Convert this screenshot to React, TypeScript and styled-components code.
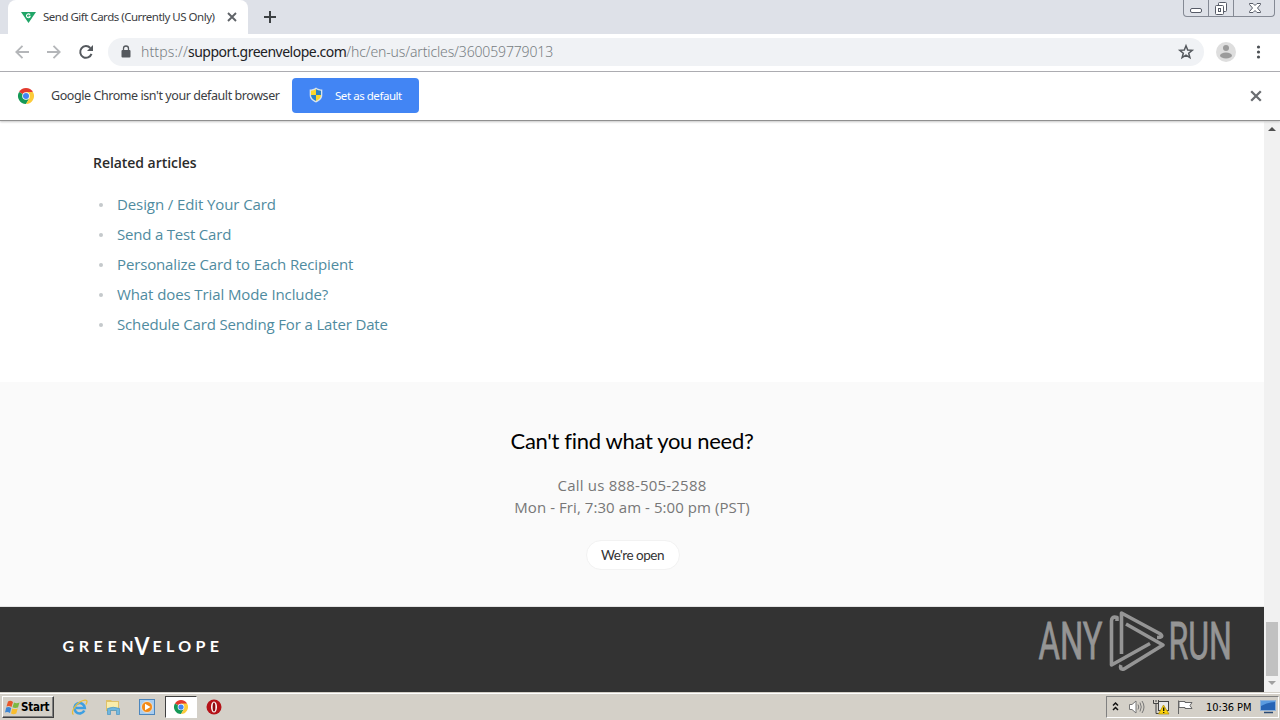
import styled, { createGlobalStyle } from 'styled-components';

const GlobalStyle = createGlobalStyle`
    * {
        box-sizing: border-box;
    }
    body {
        margin: 0;
        overflow: hidden;
    }
    svg {
        display: block;
        flex: none;
        overflow: visible;
    }
`
const Screen = styled.div`
    display: flex;
    flex-direction: column;
    width: 1280px;
    height: 720px;
    background: #fff;
    font-family: 'DejaVu Sans Condensed', 'DejaVu Sans', sans-serif;
    white-space: nowrap;
`
const TabStrip = styled.div`
    display: flex;
    height: 34px;
    padding-left: 8px;
    background: #dee1e8;
`
const Tab = styled.div`
    display: flex;
    align-items: center;
    width: 240px;
    height: 34px;
    padding-left: 13px;
    border-radius: 8px 8px 0 0;
    background: #fff;
`
const TabTitle = styled.div`
    width: 175px;
    margin: 0 9px 0 7px;
    font-family: 'Noto Sans', sans-serif;
    font-size: 11.5px;
    line-height: 34px;
    letter-spacing: -0.5px;
    color: #3c4043;
`
const NewTab = styled.div`
    flex: 1;
    padding: 11px 0 0 16px;
`
const WindowButtons = styled.div`
    display: flex;
    width: 92px;
    height: 17px;
    margin-right: 5px;
    border: 1px solid #848994;
    border-top: 0;
    border-radius: 0 0 4px 4px;
`
const WindowButton = styled.div<{ $width: number }>`
    display: flex;
    flex: none;
    justify-content: center;
    width: ${(props) => props.$width}px;
    border-right: 1px solid #848994;
    &:last-child {
        border-right: 0;
    }
`
const Toolbar = styled.div`
    display: flex;
    align-items: center;
    height: 38px;
    padding: 0 13px 1px 15px;
    border-bottom: 1px solid #aaabb0;
`
const NavIcons = styled.div`
    display: flex;
    gap: 18px;
    width: 93px;
`
const Omnibox = styled.div`
    display: flex;
    align-items: center;
    width: 1096px;
    height: 28px;
    margin-right: 12px;
    padding: 0 10px 0 13px;
    border-radius: 14px;
    background: #f0f2f5;
`
const Url = styled.div`
    flex: 1;
    margin: -1px 0 0 10px;
    font-family: 'Noto Sans', sans-serif;
    font-weight: 300;
    font-size: 14px;
    letter-spacing: 0.12px;
    color: #777d82;
`
const Domain = styled.span`
    font-weight: 400;
    letter-spacing: -0.5px;
    color: #202124;
`
const UrlPath = styled.span`
    letter-spacing: -0.14px;
`
const MenuIcon = styled.div`
    margin-left: 20px;
`
const InfoBar = styled.div`
    display: flex;
    align-items: center;
    height: 49px;
    padding: 0 18px 1px;
    border-bottom: 1px solid #909090;
    box-shadow: 0 1px 2px #c8c8c8;
    position: relative;
`
const InfoText = styled.div`
    width: 258px;
    padding-left: 17px;
    font-family: 'Noto Sans', sans-serif;
    font-size: 12.5px;
    line-height: 18px;
    letter-spacing: -0.43px;
    color: #3c4043;
`
const DefaultButton = styled.button`
    display: flex;
    align-items: center;
    gap: 12px;
    width: 127px;
    height: 35px;
    margin-right: auto;
    padding: 0 0 1px 17px;
    border: 0;
    border-radius: 4px;
    background: #4285f4;
    font-family: 'Noto Sans', sans-serif;
    font-size: 11.5px;
    letter-spacing: -0.45px;
    color: #fff;
`
const Viewport = styled.div`
    display: flex;
    height: 571px;
`
const Page = styled.main`
    width: 1264px;
    font-family: 'Open Sans', sans-serif;
`
const Related = styled.section`
    height: 261px;
    padding: 30px 93px 0;
`
const RelatedTitle = styled.h3`
    margin: 0 0 15px;
    font-size: 14px;
    font-weight: 600;
    line-height: 23px;
    letter-spacing: -0.05px;
    color: #2b2b2b;
`
const ArticleList = styled.ul`
    margin: 0;
    padding: 0;
    list-style: none;
`
const Article = styled.li<{ $spacing: number }>`
    display: flex;
    align-items: center;
    height: 30px;
    font-size: 15px;
    letter-spacing: ${(props) => props.$spacing}px;
    color: #4f8ba0;
    &::before {
        content: '';
        width: 4px;
        height: 4px;
        margin: 1px 14px 0 6px;
        border-radius: 2px;
        background: #c5c9cc;
    }
`
const Contact = styled.section`
    display: flex;
    flex-direction: column;
    align-items: center;
    height: 225px;
    padding-top: 42px;
    border-bottom: 1px solid #e4e4e4;
    background: #fafafa;
`
const ContactTitle = styled.h2`
    margin: 0 0 16px;
    font-family: Lato, sans-serif;
    font-size: 22px;
    font-weight: 400;
    line-height: 34px;
    letter-spacing: -0.32px;
    color: #000;
`
const ContactLine = styled.div<{ $spacing: number }>`
    font-size: 15px;
    line-height: 22px;
    letter-spacing: ${(props) => props.$spacing}px;
    color: #777;
`
const OpenPill = styled.div`
    width: 94px;
    height: 30px;
    margin: 22px 0 0 1px;
    border: 1px solid #f2f2f2;
    border-radius: 15px;
    background: #fff;
    font-family: Lato, sans-serif;
    font-size: 13.5px;
    line-height: 28px;
    text-align: center;
    letter-spacing: -0.48px;
    color: #333;
`
const Footer = styled.footer`
    display: flex;
    justify-content: space-between;
    height: 85px;
    padding: 3px 32px 0 62px;
    background: #333;
`
const Brand = styled.div`
    margin-top: 26px;
`
const Scrollbar = styled.div`
    display: flex;
    flex-direction: column;
    align-items: center;
    width: 16px;
    padding: 5px 0 6px;
    background: #f1f1f1;
`
const ScrollTrack = styled.div`
    display: flex;
    flex: 1;
    align-items: flex-end;
    padding-bottom: 5px;
`
const ScrollThumb = styled.div`
    width: 12px;
    height: 54px;
    background: #c1c1c1;
`
const Taskbar = styled.div`
    display: flex;
    align-items: center;
    height: 28px;
    padding: 2px 1px 0 2px;
    background: #d4d0c8;
    box-shadow: inset 0 1px #d4d0c8, inset 0 2px #fff;
`
const StartButton = styled.div`
    display: flex;
    align-items: center;
    gap: 1px;
    width: 52px;
    height: 22px;
    padding-left: 2px;
    border: 1px solid;
    border-color: #fff #404040 #404040 #fff;
    box-shadow: inset -1px -1px #808080;
    font-family: 'DejaVu Sans Condensed', 'DejaVu Sans', sans-serif;
    font-size: 11.5px;
    font-weight: 700;
    letter-spacing: -0.25px;
    color: #000;
`
const QuickLaunch = styled.div`
    display: flex;
    align-items: center;
    flex: 1;
    padding-left: 8px;
`
const LaunchItem = styled.div<{ $active?: boolean }>`
    display: flex;
    align-items: center;
    justify-content: center;
    width: ${(props) => (props.$active ? 32 : 34)}px;
    height: 22px;
    margin-left: ${(props) => (props.$active ? 1 : 0)}px;
    border: 1px solid;
    border-color: ${(props) => (props.$active ? '#404040 #fff #fff #404040' : 'transparent')};
    background: ${(props) => (props.$active ? '#fff' : 'none')};
`
const Tray = styled.div`
    display: flex;
    align-items: center;
    width: 173px;
    height: 22px;
    padding-left: 5px;
    border: 1px solid;
    border-color: #808080 #fff #fff #808080;
`
const TrayIcons = styled.div`
    display: flex;
    gap: 7px;
    margin-left: 10px;
`
const Clock = styled.div`
    width: 47px;
    margin: 0 7px 0 13px;
    font-family: 'DejaVu Sans Condensed', 'DejaVu Sans', sans-serif;
    font-size: 11px;
    letter-spacing: -0.1px;
    color: #000;
`

const articles = [
    { title: 'Design / Edit Your Card', spacing: -0.1 },
    { title: 'Send a Test Card', spacing: -0.2 },
    { title: 'Personalize Card to Each Recipient', spacing: -0.14 },
    { title: 'What does Trial Mode Include?', spacing: -0.1 },
    { title: 'Schedule Card Sending For a Later Date', spacing: -0.15 },
]

function CloseIcon({ size, color }: { size: number, color: string }) {
    return (
        <svg width={size} height={size} viewBox='0 0 10 10'>
            <path d='M1 1 9 9M9 1 1 9' stroke={color} strokeWidth='1.9' />
        </svg>
    )
}

function ChromeIcon({ size }: { size: number }) {
    return (
        <svg width={size} height={size} viewBox='0 0 16 16'>
            <path d='M8 8 1.07 4A8 8 0 0 1 14.93 4Z' fill='#e33b2e' />
            <path d='M8 8 1.07 4A8 8 0 0 0 8 16L11.5 10Z' fill='#159957' />
            <path d='M8 4H14.93A8 8 0 0 1 8 16L11.5 10Z' fill='#fccb3a' />
            <circle cx='8' cy='8' r='3.8' fill='#fff' />
            <circle cx='8' cy='8' r='3' fill='#4285f4' />
        </svg>
    )
}

function ShieldIcon() {
    return (
        <svg width='14' height='16' viewBox='0 0 14 16'>
            <path d='M7 .5C5 2 3 2.5.7 2.5V8c0 4 3 6 6.3 7.5C10.3 14 13.3 12 13.3 8V2.5C11 2.5 9 2 7 .5Z' fill='#d8e4ee' />
            <path d='M7 2C5.5 3 4 3.5 2 3.7V8h5Z' fill='#fcd72c' />
            <path d='M7 2c1.5 1 3 1.5 5 1.7V8H7Z' fill='#2d83c4' />
            <path d='M2 8c0 3 2.5 5 5 6V8Z' fill='#2d83c4' />
            <path d='M12 8c0 3-2.5 5-5 6V8Z' fill='#fcd72c' />
        </svg>
    )
}

function GreenvelopeLogo() {
    return (
        <svg width='160' height='22' viewBox='0 0 160 22' fill='#fff' fontFamily='Lato, sans-serif' fontWeight='700'>
            <text x='.5' y='16' fontSize='16' textLength='71' lengthAdjust='spacing'>GREEN</text>
            <text x='72.5' y='18.5' fontSize='24' textLength='15' lengthAdjust='spacingAndGlyphs'>V</text>
            <text x='90.5' y='16' fontSize='16' textLength='66.5' lengthAdjust='spacing'>ELOPE</text>
        </svg>
    )
}

function AnyRunLogo() {
    return (
        <svg width='194' height='64' viewBox='0 0 194 64' fill='none'>
            <g fill='#959595' stroke='#959595' strokeWidth='.8' fontFamily='Roboto, sans-serif' fontSize='52'>
                <text x='.5' y='49' textLength='64' lengthAdjust='spacingAndGlyphs'>ANY</text>
                <text x='130.5' y='49' textLength='63.5' lengthAdjust='spacingAndGlyphs'>RUN</text>
            </g>
            <g stroke='#959595' strokeWidth='3.6' strokeLinejoin='round'>
                <path d='M79 11V7.5Q73.5 6 73.5 11V55L112 33.5' />
                <path d='M83.5 44V3L122.5 24Q126 27.5 119 27.5' />
                <path d='M88 14 125 35 86 59Q81 60 83 55' />
            </g>
        </svg>
    )
}

function App() {
    return (
        <Screen>
            <GlobalStyle />
            <TabStrip>
                <Tab>
                    <svg width='15' height='12' viewBox='0 0 15 12'>
                        <path d='M0 1H15L7.5 12Z' fill='#20a567' />
                        <path d='M9.2 3.5C7 2 5 3.5 5.5 5.2 6 7.2 9 7.2 9.2 5.2H7.5' fill='none' stroke='#fff' strokeWidth='1.1' />
                    </svg>
                    <TabTitle>Send Gift Cards (Currently US Only)</TabTitle>
                    <CloseIcon size={10} color='#5f6368' />
                </Tab>
                <NewTab>
                    <svg width='12' height='12' viewBox='0 0 12 12'>
                        <path d='M6 0V12M0 6H12' stroke='#3c4043' strokeWidth='2' />
                    </svg>
                </NewTab>
                <WindowButtons>
                    <WindowButton $width={25}>
                        <svg width='14' height='16' viewBox='0 0 14 16'>
                            <rect x='1.5' y='8.5' width='11' height='4' rx='1.5' fill='#fff' stroke='#565b67' />
                        </svg>
                    </WindowButton>
                    <WindowButton $width={25}>
                        <svg width='14' height='16' viewBox='0 0 14 16' stroke='#565b67'>
                            <rect x='4.5' y='2.5' width='8' height='9' rx='1' fill='#fff' />
                            <rect x='1.5' y='5.5' width='8' height='9' rx='1' fill='#fff' />
                            <rect x='4.5' y='8.5' width='2' height='3' fill='none' />
                        </svg>
                    </WindowButton>
                    <WindowButton $width={42}>
                        <svg width='14' height='16' viewBox='0 0 14 16'>
                            <path d='M1.5 3.5H5L7 5.5 9 3.5H12.5V4.5L9.5 8 12.5 11.5V12.5H9L7 10.5 5 12.5H1.5V11.5L4.5 8 1.5 4.5Z' fill='#fff' stroke='#565b67' />
                        </svg>
                    </WindowButton>
                </WindowButtons>
            </TabStrip>
            <Toolbar>
                <NavIcons>
                    <svg width='14' height='14' viewBox='0 0 14 14' fill='none' stroke='#b4b6b9' strokeWidth='1.8'>
                        <path d='M14 7H1.5M7.5 .8 1.3 7 7.5 13.2' />
                    </svg>
                    <svg width='14' height='14' viewBox='0 0 14 14' fill='none' stroke='#b4b6b9' strokeWidth='1.8'>
                        <path d='M0 7H12.5M6.5 .8 12.7 7 6.5 13.2' />
                    </svg>
                    <svg width='14' height='14' viewBox='0 0 14 14'>
                        <path d='M12.5 8.8A5.8 5.8 0 1 1 11.3 3' fill='none' stroke='#55595e' strokeWidth='2' />
                        <path d='M14 0V6H8Z' fill='#55595e' />
                    </svg>
                </NavIcons>
                <Omnibox>
                    <svg width='10' height='14' viewBox='0 0 10 14'>
                        <path d='M2.5 6V3.5a2.5 2.5 0 0 1 5 0V6' fill='none' stroke='#55595e' strokeWidth='1.3' />
                        <rect x='.5' y='5' width='9' height='7.5' rx='1' fill='#55595e' />
                    </svg>
                    <Url>https://<Domain>support.greenvelope.com</Domain><UrlPath>/hc/en-us/articles/360059779013</UrlPath></Url>
                    <svg width='16' height='16' viewBox='0 0 16 16'>
                        <path d='M8 1.8 9.7 6 14.2 6.3 10.7 9.2 11.9 13.7 8 11.2 4.1 13.7 5.3 9.2 1.8 6.3 6.3 6Z' fill='none' stroke='#55595e' strokeWidth='1.5' />
                    </svg>
                </Omnibox>
                <svg width='20' height='20' viewBox='0 0 20 20'>
                    <circle cx='10' cy='10' r='10' fill='#dedede' />
                    <circle cx='10' cy='6' r='3' fill='#9b9b9b' />
                    <ellipse cx='10' cy='13.5' rx='6' ry='3' fill='#9b9b9b' />
                </svg>
                <MenuIcon>
                    <svg width='4' height='14' viewBox='0 0 4 14' fill='#4c5054'>
                        <circle cx='2.5' cy='2' r='1.6' />
                        <circle cx='2.5' cy='7' r='1.6' />
                        <circle cx='2.5' cy='12' r='1.6' />
                    </svg>
                </MenuIcon>
            </Toolbar>
            <InfoBar>
                <ChromeIcon size={16} />
                <InfoText>Google Chrome isn't your default browser</InfoText>
                <DefaultButton><ShieldIcon />Set as default</DefaultButton>
                <CloseIcon size={12} color='#6a6d71' />
            </InfoBar>
            <Viewport>
                <Page>
                    <Related>
                        <RelatedTitle>Related articles</RelatedTitle>
                        <ArticleList>
                            {articles.map((article) => (
                                <Article key={article.title} $spacing={article.spacing}>{article.title}</Article>
                            ))}
                        </ArticleList>
                    </Related>
                    <Contact>
                        <ContactTitle>Can't find what you need?</ContactTitle>
                        <ContactLine $spacing={0.2}>Call us 888-505-2588</ContactLine>
                        <ContactLine $spacing={0.07}>Mon - Fri, 7:30 am - 5:00 pm (PST)</ContactLine>
                        <OpenPill>We're open</OpenPill>
                    </Contact>
                    <Footer>
                        <Brand><GreenvelopeLogo /></Brand>
                        <AnyRunLogo />
                    </Footer>
                </Page>
                <Scrollbar>
                    <svg width='8' height='5' viewBox='0 0 8 5'><path d='M0 5 4 1 8 5Z' fill='#505050' /></svg>
                    <ScrollTrack><ScrollThumb /></ScrollTrack>
                    <svg width='8' height='5' viewBox='0 0 8 5'><path d='M0 0 4 4 8 0Z' fill='#a0a0a0' /></svg>
                </Scrollbar>
            </Viewport>
            <Taskbar>
                <StartButton>
                    <svg width='15' height='15' viewBox='0 0 15 15'>
                        <path d='M3 1.5Q5.5 0 8 2L6.5 7Q4 5.5 1.5 6.5Z' fill='#e8572a' />
                        <path d='M9 2.5Q11.5 4 14.5 2.5L13 7.5Q10 8.5 7.5 7.3Z' fill='#7cb842' />
                        <path d='M1.2 7.5Q4 6.5 6.2 8L5 13Q2.5 11.5 0 12.5Z' fill='#3d86d4' />
                        <path d='M7.2 8.5Q10 9.5 12.7 8.5L11.3 13.5Q8.5 15 6 13.5Z' fill='#f9bd2d' />
                    </svg>
                    Start
                </StartButton>
                <QuickLaunch>
                    <LaunchItem>
                        <svg width='17' height='17' viewBox='0 0 17 17' fill='none'>
                            <path d='M13.3 11.5A5.2 5.2 0 1 1 13.8 9H5' stroke='#3d9fe2' strokeWidth='2.6' />
                            <path d='M2.5 15.5C-1.5 13.5 6.5 2 14 1.2 17 1 16 4 14.8 5.5' stroke='#e8bd3a' strokeWidth='1.3' />
                        </svg>
                    </LaunchItem>
                    <LaunchItem>
                        <svg width='16' height='16' viewBox='0 0 16 16'>
                            <path d='M1 1H6L7 2H14V12H1Z' fill='#dfc168' />
                            <path d='M2 3H13V11H2Z' fill='#f9edac' />
                            <path d='M2.5 9.5Q8 7 14.5 9.5V15.5H11.5V11.5H5.5V15.5H2.5Z' fill='#6fb7df' stroke='#3c8dc0' strokeWidth='.6' />
                        </svg>
                    </LaunchItem>
                    <LaunchItem>
                        <svg width='16' height='16' viewBox='0 0 16 16'>
                            <rect x='.5' y='.5' width='15' height='15' fill='#a9cdef' stroke='#4c86bd' />
                            <circle cx='8' cy='8' r='5.5' fill='#f28a18' stroke='#fff' strokeWidth='.6' />
                            <path d='M6 4.8 11.5 8 6 11.2Z' fill='#fff' />
                        </svg>
                    </LaunchItem>
                    <LaunchItem $active><ChromeIcon size={14} /></LaunchItem>
                    <LaunchItem>
                        <svg width='16' height='16' viewBox='0 0 16 16'>
                            <circle cx='8' cy='8' r='7.5' fill='#b51218' />
                            <ellipse cx='8' cy='8' rx='3' ry='5.5' fill='#fff' />
                            <ellipse cx='8' cy='8' rx='1.4' ry='4.6' fill='#8d0b10' />
                        </svg>
                    </LaunchItem>
                </QuickLaunch>
                <Tray>
                    <svg width='7' height='10' viewBox='0 0 7 10'>
                        <path d='M1 3.5 3.5 1 6 3.5M1 8 3.5 5.5 6 8' fill='none' stroke='#111' strokeWidth='1.5' />
                    </svg>
                    <TrayIcons>
                        <svg width='17' height='16' viewBox='0 0 17 16' fill='none' stroke='#777'>
                            <path d='M.5 5.5H3L7 2V14L3 10.5H.5Z' fill='#fff' />
                            <path d='M9 5.5Q10.5 8 9 10.5M11 3.5Q13.5 8 11 12.5M13 2Q17 8 13 14' />
                        </svg>
                        <svg width='17' height='16' viewBox='0 0 17 16'>
                            <rect x='5.5' y='2.5' width='10' height='9' fill='#e8e8e8' stroke='#444' />
                            <path d='M.5 1V4.5H5.5V1M3 1V3M3 5V14.5H7' fill='none' stroke='#444' />
                            <path d='M10.5 6 16 15H5.5Z' fill='#fbd20b' stroke='#ad8a00' strokeWidth='.7' />
                            <path d='M10.7 8.5V12M10.7 13V14' stroke='#111' strokeWidth='1.3' />
                        </svg>
                        <svg width='16' height='16' viewBox='0 0 16 16'>
                            <path d='M1.5 1.5V15M2 2.5H8V3.5H15L13 6.5 15 9.5H8V8.5H2Z' fill='#fff' stroke='#666' />
                        </svg>
                    </TrayIcons>
                    <Clock>10:36 PM</Clock>
                    <svg width='17' height='14' viewBox='0 0 17 14'>
                        <rect x='.5' y='.5' width='15' height='10' fill='#2764b5' stroke='#8fb1d8' />
                        <path d='M1 6Q8 2 15 2V1H1Z' fill='#5b9be0' />
                        <path d='M4 12.5H13' stroke='#2a4a74' strokeWidth='1.5' />
                    </svg>
                </Tray>
            </Taskbar>
        </Screen>
    )
}

export default App
